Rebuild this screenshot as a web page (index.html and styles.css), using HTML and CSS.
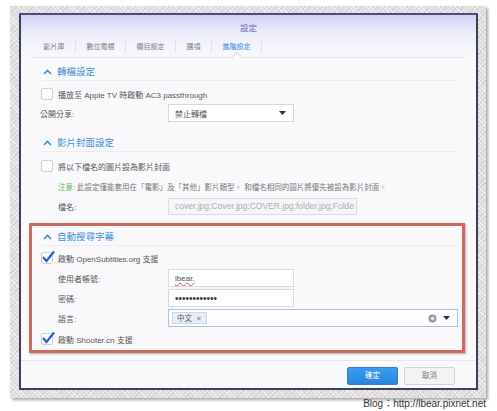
FILE: index.html
```html
<!DOCTYPE html>
<html lang="zh-Hant">
<head>
<meta charset="utf-8">
<title>設定</title>
<link rel="stylesheet" href="styles.css">
</head>
<body>
<div class="frame">
  <div class="window">
    <div class="head">
      <div class="title">設定</div>
      <div class="tabs">
        <div class="tab">影片庫</div>
        <div class="tab">數位電視</div>
        <div class="tab">欄目設定</div>
        <div class="tab">選項</div>
        <div class="tab active">進階設定</div>
      </div>
    </div>
    <div class="content">
      <div class="section s1">
        <div class="sec-head"><svg class="chev" width="9" height="6" viewBox="0 0 9 6"><polyline points="1,5 4.5,1.5 8,5" fill="none" stroke="#3d8fd9" stroke-width="1.6"/></svg>轉檔設定</div>
        <div class="row check-row"><span class="cb"></span><span>播放至 Apple TV 時啟動 AC3 passthrough</span></div>
        <div class="row field-row"><span class="label flush">公開分享:</span><div class="box select"><span>禁止轉檔</span><svg class="arrow" width="7" height="4" viewBox="0 0 7 4"><polygon points="0,0 7,0 3.5,4" fill="#333"/></svg></div></div>
      </div>
      <div class="section s2">
        <div class="sec-head"><svg class="chev" width="9" height="6" viewBox="0 0 9 6"><polyline points="1,5 4.5,1.5 8,5" fill="none" stroke="#3d8fd9" stroke-width="1.6"/></svg>影片封面設定</div>
        <div class="row check-row"><span class="cb"></span><span>將以下檔名的圖片設為影片封面</span></div>
        <div class="row note-row"><span class="note-label">注意:</span> 此設定僅能套用在「電影」及「其他」影片類型。 和檔名相同的圖片將優先被設為影片封面。</div>
        <div class="row field-row f18"><span class="label">檔名:</span><div class="box disabled"><span class="ph">cover.jpg;Cover.jpg;COVER.jpg;folder.jpg;Folde</span></div></div>
      </div>
      <div class="section s3">
        <div class="sec-head"><svg class="chev" width="9" height="6" viewBox="0 0 9 6"><polyline points="1,5 4.5,1.5 8,5" fill="none" stroke="#3d8fd9" stroke-width="1.6"/></svg>自動搜尋字幕</div>
        <div class="row check-row"><span class="cb checked"><svg class="tick" width="14" height="13" viewBox="0 0 14 13"><polyline points="2,7 5.5,11 13,1.5" fill="none" stroke="#1f66cc" stroke-width="2.2"/></svg></span><span>啟動 OpenSubtitles.org 支援</span></div>
        <div class="row field-row f20"><span class="label">使用者帳號:</span><div class="box text"><span class="typo">lbear.</span></div></div>
        <div class="row field-row f20"><span class="label">密碼:</span><div class="box text"><span class="dots">••••••••••••</span></div></div>
        <div class="row field-row f20"><span class="label">語言:</span><div class="box tags"><span class="tag">中文 <span class="x">✕</span></span><span class="spacer"></span><svg class="clear" width="9" height="9" viewBox="0 0 9 9"><circle cx="4.5" cy="4.5" r="4" fill="#9a9a9a"/><circle cx="4.5" cy="4.5" r="1.8" fill="#e8e8e8"/></svg><svg class="arrow" width="7" height="4" viewBox="0 0 7 4"><polygon points="0,0 7,0 3.5,4" fill="#333"/></svg></div></div>
        <div class="row check-row last"><span class="cb checked"><svg class="tick" width="14" height="13" viewBox="0 0 14 13"><polyline points="2,7 5.5,11 13,1.5" fill="none" stroke="#1f66cc" stroke-width="2.2"/></svg></span><span>啟動 Shooter.cn 支援</span></div>
      </div>
    </div>
    <div class="footer">
      <div class="btn primary">確定</div>
      <div class="btn">取消</div>
    </div>
  </div>
</div>
<div class="credit">Blog：http://lbear.pixnet.net</div>
</body>
</html>
```

FILE: styles.css
```css
* { box-sizing: border-box; }
html, body { margin: 0; padding: 0; background: #fff; }
body {
  font-family: "Liberation Sans", "Noto Sans CJK TC", sans-serif;
  color: #555;
  width: 497px;
  height: 411px;
  overflow: hidden;
}
.frame {
  margin: 6px 0 0 10px;
  width: 476px;
  height: 392px;
  padding: 7px 0 0 9px;
  background-color: #dedede;
  background-image:
    repeating-linear-gradient(45deg, rgba(255,255,255,0.55) 0 1px, transparent 1px 3px),
    repeating-linear-gradient(-45deg, rgba(0,0,0,0.07) 0 1px, transparent 1px 4px);
  box-shadow: 2px 2px 3px rgba(0,0,0,0.35);
}
.window {
  width: 459px;
  height: 377px;
  border: 2px solid #3b3f58;
  border-top-color: #4b4b7e;
  background: #f9f9fc;
  display: flex;
  flex-direction: column;
}
.head {
  height: 43px;
  background: linear-gradient(#d2d2f6 0%, #eeeefb 45%, #f9f9fc 100%);
}
.title {
  height: 24px;
  line-height: 26px;
  text-align: center;
  font-size: 8.5px;
  color: #6a6ac4;
}
.tabs {
  display: flex;
  height: 19px;
  margin: 0 13px 0 12px;
  border-bottom: 1px solid #e2e2ea;
  padding-top: 1px;
}
.tab {
  position: relative;
  height: 13px;
  line-height: 13px;
  padding: 0 10.5px;
  font-size: 7px;
  color: #7a7a82;
  border-right: 1px solid #e0e0e6;
}
.tab.active { color: #3a8ad8; }
.tab.active::after {
  content: "";
  position: absolute;
  left: 50%;
  bottom: -6px;
  width: 5px;
  height: 5px;
  margin-left: -3px;
  background: #f9f9fc;
  border-left: 1px solid #d8d8e2;
  border-top: 1px solid #d8d8e2;
  transform: rotate(45deg);
}
.content {
  padding: 0 11px 0 8px;
}
.section {
  border: 3px solid transparent;
  border-top: 0;
  border-bottom: 0;
  padding: 0 4px 0 10px;
}
.sec-head {
  display: flex;
  align-items: center;
  height: 17px;
  line-height: 16px;
  border-bottom: 1px solid #ececf2;
  font-size: 9.5px;
  color: #3d8fd9;
}
.chev { margin: 0 5px 0 1px; }
.s1 .sec-head { margin-top: 6px; }
.s2 .sec-head { margin-top: 13px; }
.s3 {
  margin-top: 8px;
  border: 3px solid #cc6a5e;
  padding-top: 3px;
  padding-bottom: 1px;
  box-shadow: 1px 1px 2px rgba(0,0,0,0.3);
}
.row {
  display: flex;
  align-items: center;
  font-size: 8px;
  color: #555;
}
.check-row { height: 20px; margin-top: 3px; }
.s2 .check-row { margin-top: 4px; }
.s3 .check-row { margin-top: 2px; }
.s3 .check-row.last { margin-top: 1px; }
.cb {
  position: relative;
  width: 12px;
  height: 12px;
  margin: 0 5px 0 -1px;
  border: 1px solid #cfcfd6;
  border-radius: 2px;
  background: #fff;
  flex: none;
}
.tick {
  position: absolute;
  left: -1px;
  top: -3px;
}
.field-row { height: 18px; }
.field-row.f20 { height: 20px; }
.label {
  width: 110px;
  margin-left: 16px;
  flex: none;
}
.label.flush { width: 128px; margin-left: -2px; }
.box {
  height: 18px;
  border: 1px solid #d6d6de;
  background: #fff;
  display: flex;
  align-items: center;
  padding: 0 6px;
  overflow: hidden;
  white-space: nowrap;
}
.select { width: 126px; justify-content: space-between; padding-right: 7px; }
.text { width: 126px; height: 18px; border-color: #d9dbe3; }
.disabled { width: 189px; height: 17px; background: #f6f6f8; border-color: #dadae0; padding: 0 3px 0 6px; }
.ph { color: #acacb2; font-size: 8.5px; }
.typo {
  text-decoration: underline wavy #e05050;
  text-decoration-thickness: 1px;
  text-underline-offset: 1px;
  color: #555;
}
.dots { font-size: 10px; letter-spacing: 0; color: #333; }
.tags { width: 290px; border-color: #a9c3df; padding: 0 7px 0 3px; }
.tag {
  height: 12px;
  line-height: 11px;
  padding: 0 4px;
  background: #e9eef5;
  border: 1px solid #c9d6e6;
  font-size: 7.5px;
  color: #556;
}
.tag .x { color: #888; font-size: 7px; margin-left: 2px; }
.spacer { flex: 1; }
.clear { margin-right: 6px; }
.note-row { height: 21px; padding-left: 16px; font-size: 7.5px; color: #777; white-space: nowrap; }
.note-label { color: #63b363; margin-right: 2px; }
.footer {
  margin: 7px 0 0;
  border-top: 1px solid #e6e6ec;
  padding: 6px 21px 0 0;
  display: flex;
  justify-content: flex-end;
  gap: 6px;
}
.btn {
  width: 51px;
  height: 18px;
  line-height: 16px;
  text-align: center;
  font-size: 7.5px;
  color: #777;
  background: #f3f3f5;
  border: 1px solid #d2d3d8;
  border-radius: 2px;
}
.btn.primary {
  color: #fff;
  background: linear-gradient(#3b9bee, #2a84dc);
  border-color: #2a7fd2;
}
.credit {
  width: 486px;
  text-align: right;
  font-family: "Liberation Sans", "Noto Sans CJK TC", sans-serif;
  font-size: 10px;
  line-height: 11px;
  color: #333;
}
```
